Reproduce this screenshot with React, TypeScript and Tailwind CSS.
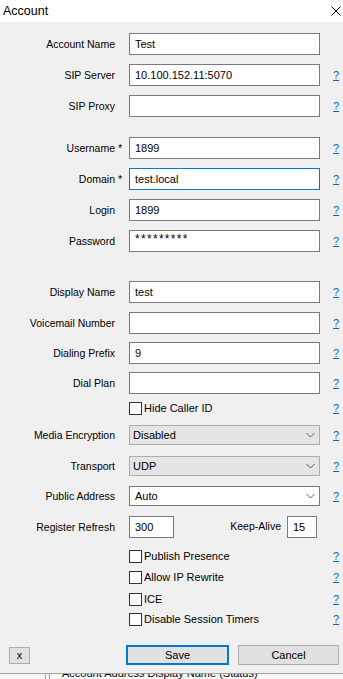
import React from "react";

const font = { fontFamily: '"Liberation Sans", Arial, sans-serif' };

function Help() {
  return (
    <span className="ml-[13px] w-[8px] text-[11px] leading-none text-[#0066cc] underline">?</span>
  );
}

function Label({ text, star }: { text: string; star?: boolean }) {
  return (
    <>
      <div className="w-[115px] shrink-0 text-right text-[10.5px] leading-[13px] text-black whitespace-nowrap">{text}</div>
      <div className="w-[14px] shrink-0 text-[11px] leading-[13px] text-black pl-[3px]">{star ? "*" : ""}</div>
    </>
  );
}

function Field({
  label,
  value,
  star,
  help = true,
  focused,
  mt,
  password,
}: {
  label: string;
  value?: string;
  star?: boolean;
  help?: boolean;
  focused?: boolean;
  mt: string;
  password?: boolean;
}) {
  return (
    <div className={`flex items-center h-[22px] ${mt}`}>
      <Label text={label} star={star} />
      <div
        className={`w-[191px] h-[22px] shrink-0 bg-white border ${
          focused ? "border-[#0078d7]" : "border-[#7a7a7a]"
        } flex items-center pl-[5px] text-[11px] text-black`}
      >
        {password ? (
          <span className="text-[12px] leading-none tracking-[1.3px] -mt-[5px]">{value}</span>
        ) : (
          value
        )}
      </div>
      {help && <Help />}
    </div>
  );
}

function Chevron() {
  return (
    <svg width="9" height="5" viewBox="0 0 9 5" className="absolute right-[4px] top-1/2 -translate-y-1/2">
      <path d="M0.5 0.5 L4.5 4.5 L8.5 0.5" fill="none" stroke="#606060" strokeWidth="1" />
    </svg>
  );
}

function Select({
  label,
  value,
  disabled,
  mt,
}: {
  label: string;
  value: string;
  disabled?: boolean;
  mt: string;
}) {
  return (
    <div className={`flex items-center h-[20px] ${mt}`}>
      <Label text={label} />
      <div
        className={`relative w-[191px] h-[20px] shrink-0 border ${
          disabled ? "bg-[#e5e5e5] border-[#adadad] pl-[3px]" : "bg-white border-[#7a7a7a] pl-[5px]"
        } flex items-center text-[11px] text-black`}
      >
        {value}
        <Chevron />
      </div>
      <Help />
    </div>
  );
}

function Check({ label, mt }: { label: string; mt: string }) {
  return (
    <div className={`flex items-center h-[13px] ${mt}`}>
      <div className="w-[129px] shrink-0" />
      <div className="w-[13px] h-[13px] shrink-0 bg-white border border-[#333333]" />
      <div className="w-[178px] shrink-0 pl-[2px] text-[11px] leading-[13px] text-black whitespace-nowrap">{label}</div>
      <Help />
    </div>
  );
}

export default function App() {
  return (
    <div className="w-[343px] h-[679px] overflow-hidden bg-[#f0f0f0] flex flex-col" style={font}>
      {/* Title bar */}
      <div className="h-[22px] bg-white flex items-center justify-between pl-[3px] pr-[1px] shrink-0">
        <span className="text-[12.5px] text-black">Account</span>
        <svg width="10" height="10" viewBox="0 0 10 10" className="mr-[1px]">
          <path d="M0.5 0.5 L9.5 9.5 M9.5 0.5 L0.5 9.5" stroke="#000" strokeWidth="1" />
        </svg>
      </div>

      {/* Body */}
      <div className="flex flex-col h-[652px] shrink-0 border-b border-[#a0a0a0]">
        <Field label="Account Name" value="Test" help={false} mt="mt-[11px]" />
        <Field label="SIP Server" value="10.100.152.11:5070" mt="mt-[9px]" />
        <Field label="SIP Proxy" mt="mt-[9px]" />

        <Field label="Username" value="1899" star mt="mt-[20px]" />
        <Field label="Domain" value="test.local" star focused mt="mt-[9px]" />
        <Field label="Login" value="1899" mt="mt-[9px]" />
        <Field label="Password" value="*********" password mt="mt-[9px]" />

        <Field label="Display Name" value="test" mt="mt-[29px]" />
        <Field label="Voicemail Number" mt="mt-[9px]" />
        <Field label="Dialing Prefix" value="9" mt="mt-[8px]" />
        <Field label="Dial Plan" mt="mt-[8px]" />

        <Check label="Hide Caller ID" mt="mt-[8px]" />

        <Select label="Media Encryption" value="Disabled" disabled mt="mt-[10px]" />
        <Select label="Transport" value="UDP" disabled mt="mt-[11px]" />
        <Select label="Public Address" value="Auto" mt="mt-[10px]" />

        <div className="flex items-center h-[22px] mt-[10px]">
          <Label text="Register Refresh" />
          <div className="w-[45px] h-[22px] shrink-0 bg-white border border-[#7a7a7a] flex items-center pl-[5px] text-[11px] text-black">
            300
          </div>
          <div className="w-[113px] shrink-0 text-right pr-[6px] text-[10.5px] text-black">Keep-Alive</div>
          <div className="w-[30px] h-[22px] shrink-0 bg-white border border-[#7a7a7a] flex items-center pl-[5px] text-[11px] text-black">
            15
          </div>
        </div>

        <Check label="Publish Presence" mt="mt-[12px]" />
        <Check label="Allow IP Rewrite" mt="mt-[8px]" />
        <Check label="ICE" mt="mt-[9px]" />
        <Check label="Disable Session Timers" mt="mt-[7px]" />

        <div className="flex items-center mt-[19px] h-[20px]">
          <div className="ml-[9px] w-[21px] h-[17px] bg-[#e1e1e1] border border-[#adadad] flex items-center justify-center text-[11px] text-black">
            x
          </div>
          <div className="ml-[96px] w-[103px] h-[20px] bg-[#e1e1e1] border-2 border-[#0078d7] flex items-center justify-center text-[11px] text-black">
            Save
          </div>
          <div className="ml-[9px] w-[101px] h-[20px] bg-[#e1e1e1] border border-[#adadad] flex items-center justify-center text-[11px] text-black">
            Cancel
          </div>
        </div>
      </div>

      {/* Underlying window peeking out */}
      <div className="flex-1 bg-[#f7f7f7] flex overflow-hidden">
        <div className="ml-[45px] w-[1px] bg-[#a0a0a0]" />
        <div className="ml-[3px] w-[1px] bg-[#a0a0a0]" />
        <div className="ml-[12px] -mt-[7px] text-[11px] leading-[13px] text-black whitespace-nowrap">
          Account Address    Display Name (Status)
        </div>
      </div>
    </div>
  );
}
